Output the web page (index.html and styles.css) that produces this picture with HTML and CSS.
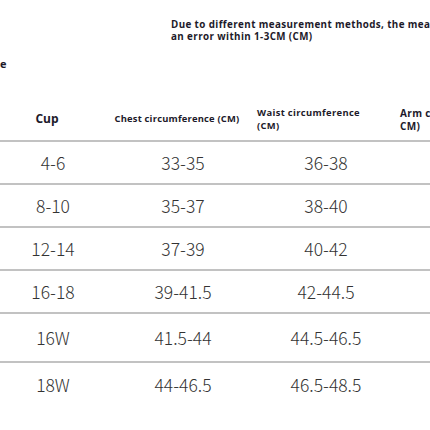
FILE: index.html
```html
<!DOCTYPE html>
<html lang="en">
  <head>
    <meta charset="UTF-8" />
    <meta name="viewport" content="width=device-width, initial-scale=1.0" />
    <title>Size chart</title>
    <link rel="stylesheet" href="styles.css">
  </head>
  <body>
    <div class="sheet">
      <div class="note">
        Due to different measurement methods, the measurement may have<br />
        an error within 1-3CM (CM)
      </div>

      <div class="title">e</div>

      <div class="chart">
        <div class="row head">
          <div class="cell c1">Cup</div>
          <div class="cell c2">Chest circumference (CM)</div>
          <div class="cell c3">Waist circumference<br />(CM)</div>
          <div class="cell c4">Arm circumference (<br />CM)</div>
        </div>

        <div class="row">
          <div class="cell c1">4-6</div>
          <div class="cell c2">33-35</div>
          <div class="cell c3">36-38</div>
          <div class="cell c4"></div>
        </div>
        <div class="row">
          <div class="cell c1">8-10</div>
          <div class="cell c2">35-37</div>
          <div class="cell c3">38-40</div>
          <div class="cell c4"></div>
        </div>
        <div class="row">
          <div class="cell c1">12-14</div>
          <div class="cell c2">37-39</div>
          <div class="cell c3">40-42</div>
          <div class="cell c4"></div>
        </div>
        <div class="row">
          <div class="cell c1">16-18</div>
          <div class="cell c2">39-41.5</div>
          <div class="cell c3">42-44.5</div>
          <div class="cell c4"></div>
        </div>
        <div class="row tall">
          <div class="cell c1">16W</div>
          <div class="cell c2">41.5-44</div>
          <div class="cell c3">44.5-46.5</div>
          <div class="cell c4"></div>
        </div>
        <div class="row last">
          <div class="cell c1">18W</div>
          <div class="cell c2">44-46.5</div>
          <div class="cell c3">46.5-48.5</div>
          <div class="cell c4"></div>
        </div>
      </div>
    </div>
  </body>
</html>
```

FILE: styles.css
```css
body,
html {
  margin: 0;
  padding: 0;
  background-color: #fff;
  overflow: hidden;
}

.sheet {
  width: 430px;
  height: 430px;
  overflow: hidden;
  font-family: "Open Sans", "Noto Sans", sans-serif;
  color: #1d1a2a;
}

.note {
  padding: 19px 0 0 171px;
  font-size: 9.8px;
  line-height: 12px;
  font-weight: 700;
  white-space: nowrap;
  letter-spacing: 0.4px;
}

.title {
  margin-top: 13px;
  font-size: 11px;
  font-weight: 700;
}

.chart {
  margin-top: 22px;
  width: 540px;
}

.row {
  box-sizing: border-box;
  display: grid;
  grid-template-columns: 106px 154px 132px 148px;
  align-items: center;
  height: 43px;
  border-top: 2px solid #c2c2c2;
  font-family: "Noto Sans CJK SC", "Noto Sans", sans-serif;
  font-weight: 300;
  font-size: 17.5px;
  color: #333;
}

.row.tall {
  height: 49px;
}

.row.last {
  height: 44px;
}

.cell {
  text-align: center;
  white-space: nowrap;
}

.head {
  border-top: none;
  height: 47px;
  padding-top: 3px;
  font-family: "Open Sans", "Noto Sans", sans-serif;
  font-weight: 700;
  font-size: 9.4px;
  line-height: 13px;
  letter-spacing: 0.35px;
  color: #1d1a2a;
}

.head .c1 {
  font-size: 12px;
  padding-right: 12px;
  letter-spacing: 0;
}

.head .c2 {
  padding-right: 12px;
  letter-spacing: 0.2px;
}

.head .c3 {
  text-align: left;
  margin-left: -3px;
  margin-top: 2px;
}

.head .c4 {
  text-align: left;
  padding-left: 8px;
  margin-top: 4px;
  font-size: 10px;
}

.c4 {
  text-align: left;
}
```
